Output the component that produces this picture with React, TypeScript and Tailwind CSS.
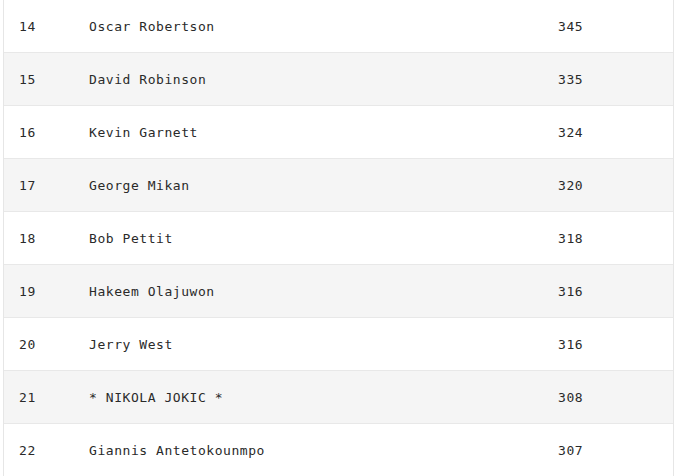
const rows = [
  { rank: 14, name: "Oscar Robertson", score: 345 },
  { rank: 15, name: "David Robinson", score: 335 },
  { rank: 16, name: "Kevin Garnett", score: 324 },
  { rank: 17, name: "George Mikan", score: 320 },
  { rank: 18, name: "Bob Pettit", score: 318 },
  { rank: 19, name: "Hakeem Olajuwon", score: 316 },
  { rank: 20, name: "Jerry West", score: 316 },
  { rank: 21, name: "* NIKOLA JOKIC *", score: 308 },
  { rank: 22, name: "Giannis Antetokounmpo", score: 307 },
];

export default function App() {
  return (
    <div className="h-[476px] w-[677px] overflow-hidden bg-white">
      <div
        className="ml-[3px] w-[671px] border-x border-[#e6e6e6] text-[13px] tracking-[0.55px] text-[#2a2a2a]"
        style={{ fontFamily: '"DejaVu Sans Mono", monospace' }}
      >
        {rows.map((r, i) => (
          <div
            key={r.rank}
            className={
              i % 2 === 1
                ? "flex h-[53px] items-center border-b border-[#e8e8e8] bg-[#f5f5f5] pt-[2px]"
                : "flex h-[53px] items-center border-b border-[#e8e8e8] bg-white pt-[2px]"
            }
          >
            <div className="w-[85px] pl-[15px]">{r.rank}</div>
            <div className="w-[469px]">{r.name}</div>
            <div>{r.score}</div>
          </div>
        ))}
      </div>
    </div>
  );
}
